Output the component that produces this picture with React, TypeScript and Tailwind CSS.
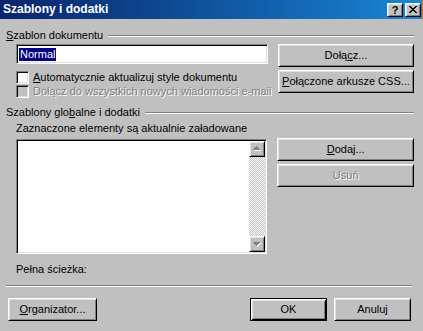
import type { ReactNode } from "react";

const raised =
  "border border-t-white border-l-white border-r-black border-b-black shadow-[inset_1px_1px_0_#dfdfdf,inset_-1px_-1px_0_#808080]";
const sunken =
  "border border-t-[#808080] border-l-[#808080] border-r-white border-b-white shadow-[inset_1px_1px_0_#000,inset_-1px_-1px_0_#dfdfdf]";
const disabledText = "text-[#808080] [text-shadow:1px_1px_0_#fff]";

function Btn({
  children,
  disabled,
  def,
  className = "",
}: {
  children: ReactNode;
  disabled?: boolean;
  def?: boolean;
  className?: string;
}) {
  const frame = def
    ? "border border-black shadow-[inset_1px_1px_0_#fff,inset_-1px_-1px_0_#000,inset_2px_2px_0_#dfdfdf,inset_-2px_-2px_0_#808080]"
    : raised;
  return (
    <div
      className={`h-[23px] flex items-center justify-center bg-[#c0c0c0] whitespace-nowrap ${frame} ${
        disabled ? disabledText : ""
      } ${className}`}
    >
      {children}
    </div>
  );
}

function Header({ children, className = "" }: { children: ReactNode; className?: string }) {
  return (
    <div className={`flex items-center h-[13px] ${className}`}>
      <span className="whitespace-nowrap">{children}</span>
      <div className="flex-1 ml-[5px] h-[2px] border-t border-t-[#808080] border-b border-b-white" />
    </div>
  );
}

function Check({ disabled, children }: { disabled?: boolean; children: ReactNode }) {
  return (
    <div className="flex items-center h-[14px]">
      <div className={`w-[13px] h-[13px] shrink-0 ${sunken} ${disabled ? "bg-[#c0c0c0]" : "bg-white"}`} />
      <span className={`ml-[4px] whitespace-nowrap ${disabled ? disabledText : ""}`}>{children}</span>
    </div>
  );
}

function Arrow({ down }: { down?: boolean }) {
  const up = "M7 5h1v1H7zM6 6h3v1H6zM5 7h5v1H5zM4 8h7v1H4z";
  const dn = "M4 6h7v1H4zM5 7h5v1H5zM6 8h3v1H6zM7 9h1v1H7z";
  const d = down ? dn : up;
  return (
    <div className={`w-[16px] h-[16px] bg-[#c0c0c0] ${raised}`}>
      <svg width="14" height="14" viewBox="1 1 14 14">
        <path d={d} fill="#fff" transform="translate(1 1)" />
        <path d={d} fill="#808080" />
      </svg>
    </div>
  );
}

export default function App() {
  return (
    <div className="w-[423px] h-[331px] bg-[#c0c0c0] flex flex-col text-[11px] leading-[13px] text-black [font-family:'Liberation_Sans',Arial,sans-serif] overflow-hidden">
      {/* pasek tytułu */}
      <div className="h-[19px] flex shrink-0">
        <div className="flex-1 flex items-center bg-linear-to-r from-[#0a246a] to-[#1a86d4] pl-[3px] pr-[1px]">
          <span className="text-white font-bold text-[12px] leading-[15px]">Szablony i dodatki</span>
          <div className="ml-auto flex gap-[2px]">
            <div className={`w-[16px] h-[14px] bg-[#c0c0c0] flex items-center justify-center font-bold text-[11px] leading-[12px] ${raised}`}>
              ?
            </div>
            <div className={`w-[16px] h-[14px] bg-[#c0c0c0] flex items-center justify-center ${raised}`}>
              <svg width="8" height="7" viewBox="0 0 8 7">
                <path d="M0 0h2v1H0zM6 0h2v1H6zM1 1h2v1H1zM5 1h2v1H5zM2 2h4v1H2zM3 3h2v1H3zM2 4h4v1H2zM1 5h2v1H1zM5 5h2v1H5zM0 6h2v1H0zM6 6h2v1H6z" fill="#000" />
              </svg>
            </div>
          </div>
        </div>
        <div className="w-px bg-[#c47e36]" />
      </div>

      <div className="flex flex-col pl-[6px] pr-[9px]">
        <Header className="mt-[10px]">
          <u>S</u>zablon dokumentu
        </Header>
        <div className="flex mt-[2px]">
          <div className="ml-[10px] w-[252px] flex flex-col">
            <div className={`h-[20px] bg-white flex items-center pl-[2px] ${sunken}`}>
              <span className="bg-[#000080] text-white px-px">Normal</span>
            </div>
            <div className="mt-[6px]">
              <Check>
                <u>A</u>utomatycznie aktualizuj style dokumentu
              </Check>
            </div>
            <Check disabled>Dołącz do wszystkich nowych wiadomości e-mail</Check>
          </div>
          <div className="ml-[10px] w-[137px] flex flex-col gap-[3px]">
            <Btn>
              Dołą<u>c</u>z...
            </Btn>
            <Btn>
              <u>P</u>ołączone arkusze CSS...
            </Btn>
          </div>
        </div>

        <Header className="mt-[8px]">
          Szablony glo<u>b</u>alne i dodatki
        </Header>
        <div className="flex mt-[3px]">
          <div className="ml-[10px] w-[252px] flex flex-col">
            <span className="whitespace-nowrap">Zaznaczone elementy są aktualnie załadowane</span>
            <div className={`mt-[4px] h-[115px] bg-white flex justify-end ${sunken} p-px`}>
              <div className="w-[16px] flex flex-col">
                <Arrow />
                <div className="flex-1 [background:repeating-conic-gradient(#c0c0c0_0_25%,#fff_0_50%)_0_0/2px_2px]" />
                <Arrow down />
              </div>
            </div>
            <span className="mt-[9px]">Pełna ścieżka:</span>
          </div>
          <div className="ml-[10px] w-[137px] mt-[16px] flex flex-col gap-[3px]">
            <Btn>
              <u>D</u>odaj...
            </Btn>
            <Btn disabled>Usuń</Btn>
          </div>
        </div>

        <div className="mt-[9px] mr-[2px] h-[2px] border-t border-t-[#808080] border-b border-b-white" />

        <div className="flex mt-[11px] ml-[2px] mr-[3px]">
          <Btn className="w-[89px]">
            <u>O</u>rganizator...
          </Btn>
          <Btn def className="w-[77px] ml-auto">
            OK
          </Btn>
          <Btn className="w-[77px] ml-[7px]">Anuluj</Btn>
        </div>
      </div>
    </div>
  );
}
